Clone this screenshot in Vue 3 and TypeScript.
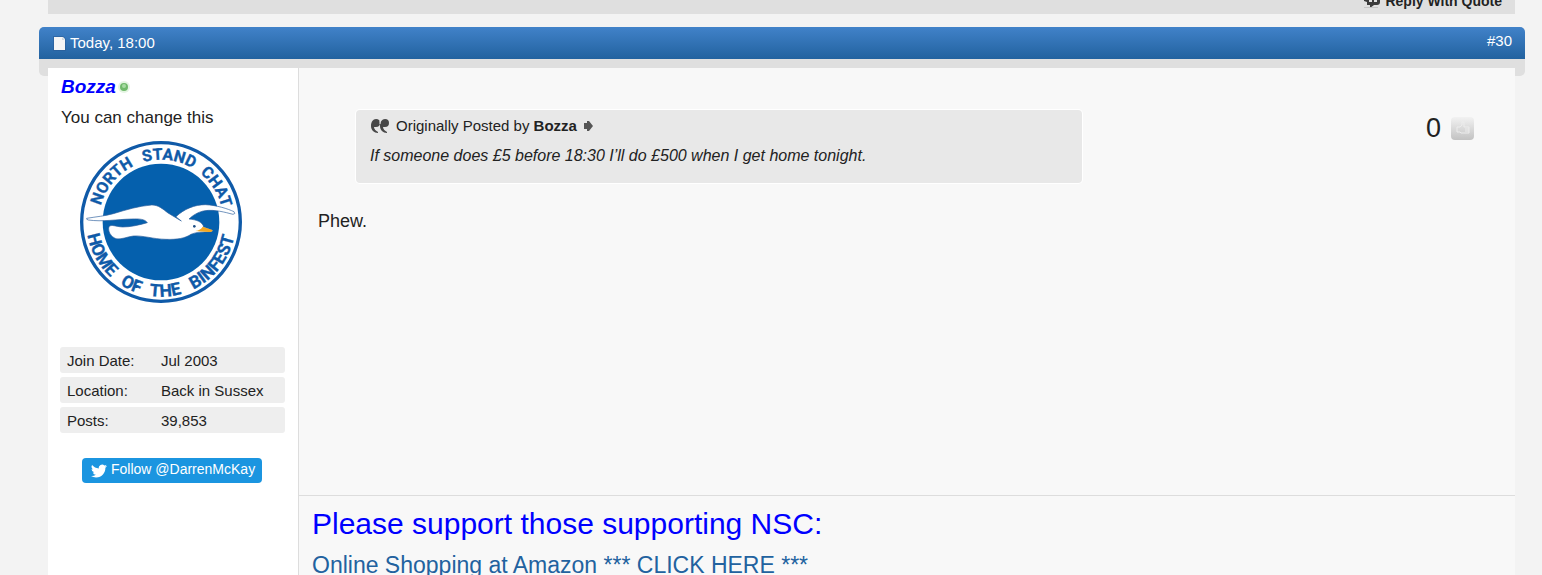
<script setup lang="ts">
interface Fact {
  label: string
  value: string
}

interface RingWord {
  text: string
  offset: string
}

const facts: Fact[] = [
  { label: 'Join Date:', value: 'Jul 2003' },
  { label: 'Location:', value: 'Back in Sussex' },
  { label: 'Posts:', value: '39,853' },
]

const topWords: RingWord[] = [
  { text: 'NORTH', offset: '22%' },
  { text: 'STAND', offset: '54%' },
  { text: 'CHAT', offset: '82%' },
]

const bottomWords: RingWord[] = [
  { text: 'HOME', offset: '16%' },
  { text: 'OF', offset: '36%' },
  { text: 'THE', offset: '52%' },
  { text: 'BINFEST', offset: '79%' },
]
</script>

<template>
  <main class="thread">
    <footer class="prev-foot">
      <a class="reply" href="#reply">
        <svg class="reply-icon" viewBox="0 0 17 16" aria-hidden="true">
          <path d="M3 1h12q2 0 2 2v6q0 3-3 3h-3l-4 3v-3H4V9L1 8V6l2-1z" fill="#3a3a3a" />
          <path d="M6 7h3v2H6zM11 7h3v2h-3z" fill="#dfdfdf" />
          <path d="M1 14h14v1H1z" fill="#c4c4c4" />
        </svg>
        <span>Reply With Quote</span>
      </a>
    </footer>

    <article class="post">
      <header class="post-head">
        <div class="head-bar">
          <span class="date">
            <svg class="doc" viewBox="0 0 13 15" aria-hidden="true">
              <path d="M0 0h10l3 3v12H0z" fill="#2a5c96" opacity=".6" />
              <path d="M1 1h9l2 2v11H1z" fill="#f5f5f5" />
              <path d="M9 1v3h3z" fill="#d5d9de" />
            </svg>
            <time>Today, 18:00</time>
          </span>
          <a class="number" href="#post30">#30</a>
        </div>
      </header>

      <div class="post-body">
        <aside class="user">
          <div class="name-row">
            <a class="name" href="#bozza">Bozza</a>
            <svg class="online" viewBox="0 0 14 14" role="img" aria-label="Online">
              <circle cx="7" cy="7" r="6" fill="#e4f5e2" />
              <circle cx="7" cy="7" r="4" fill="#6fb96a" />
              <circle cx="7" cy="6" r="2" fill="#a6dba1" />
            </svg>
          </div>
          <p class="title">You can change this</p>

          <svg class="badge" viewBox="0 0 555 555" role="img" aria-label="North Stand Chat">
            <defs>
              <path id="arc-top" d="M86 276A187 187 0 0 1 460 276" />
              <path id="arc-bottom" d="M49 276A224 224 0 0 0 497 276" />
            </defs>
            <circle cx="273" cy="276" r="238" fill="#fff" stroke="#0f5aa8" stroke-width="10" />
            <circle cx="273" cy="276" r="175" fill="#0560ad" />
            <text v-for="word in topWords" :key="word.text" class="ring ring-top">
              <textPath href="#arc-top" :startOffset="word.offset">{{ word.text }}</textPath>
            </text>
            <text v-for="word in bottomWords" :key="word.text" class="ring ring-bottom">
              <textPath href="#arc-bottom" :startOffset="word.offset">{{ word.text }}</textPath>
            </text>
            <path
              d="M50 265C80 260 105 258 130 251C170 239 205 228 245 225C264 224 280 238 294 249L334 273C323 265 320 262 318 260C342 237 374 224 406 224C442 226 472 236 492 245Q498 252 489 253C466 247 434 238 405 242C382 246 368 257 357 267C380 269 398 276 401 291L428 301Q427 307 414 306C389 305 375 308 363 313C345 325 322 329 288 328C248 327 219 316 190 318C169 321 155 329 138 326C122 320 113 303 117 290C124 282 137 290 158 291C182 291 207 285 232 278C225 267 207 266 185 267C140 268 98 276 55 270Q48 268 50 265Z"
              fill="#fff"
              stroke="#2c5f9d"
              stroke-width="2"
            />
            <path d="M398 290L427 300Q430 306 416 306L376 303Q393 300 398 290Z" fill="#f2a722" />
            <circle cx="373" cy="289" r="4" fill="#1d4f86" />
          </svg>

          <dl class="facts">
            <div v-for="fact in facts" :key="fact.label" class="fact">
              <dt>{{ fact.label }}</dt>
              <dd>{{ fact.value }}</dd>
            </div>
          </dl>

          <a class="follow" href="#follow">
            <svg class="bird" viewBox="0 0 24 24" aria-hidden="true">
              <path
                fill="#fff"
                d="M23.95 4.57a10 10 0 0 1-2.82.77 4.96 4.96 0 0 0 2.16-2.72c-.95.55-2 .96-3.13 1.18a4.92 4.92 0 0 0-8.38 4.49C7.69 8.1 4.07 6.13 1.64 3.16a4.92 4.92 0 0 0 1.52 6.57 4.9 4.9 0 0 1-2.23-.61v.06a4.92 4.92 0 0 0 3.95 4.83 5 5 0 0 1-2.21.08 4.94 4.94 0 0 0 4.6 3.42A9.87 9.87 0 0 1 0 19.54a14 14 0 0 0 7.55 2.21c9.05 0 14-7.5 14-13.98 0-.21 0-.42-.02-.63a9.94 9.94 0 0 0 2.46-2.55z"
              />
            </svg>
            <span class="follow-text">Follow @DarrenMcKay</span>
          </a>
        </aside>

        <section class="content">
          <div class="message">
            <div class="text">
              <blockquote class="quote">
                <div class="quote-head">
                  <svg class="marks" viewBox="0 0 19 15" aria-hidden="true">
                    <g fill="#484848">
                      <path d="M5 0C2 0 0 3 0 7c0 4 3 7 7 7v-1c-2-1-4-3-4-5h2q4 0 4-4T5 0z" />
                      <path d="M14 0c-3 0-5 3-5 7 0 4 3 7 7 7v-1c-2-1-4-3-4-5h2q4 0 4-4t-4-4z" />
                    </g>
                    <path d="M9 2v3" stroke="#e8e8e8" />
                  </svg>
                  <span>Originally Posted by <strong>Bozza</strong></span>
                  <a class="jump" href="#original" aria-label="View original post">
                    <svg viewBox="0 0 10 12" aria-hidden="true">
                      <path d="M1 3h3V1h2l4 5-4 5H4V9H1z" fill="#555" />
                    </svg>
                  </a>
                </div>
                <p class="quote-text">If someone does £5 before 18:30 I’ll do £500 when I get home tonight.</p>
              </blockquote>
              <p class="reply-text">Phew.</p>
            </div>
            <div class="likes">
              <span class="count">0</span>
              <button class="thumb" type="button" aria-label="Like">
                <svg viewBox="0 0 14 14" aria-hidden="true">
                  <path
                    d="M1 6h3l2-2V1h2v5h5v6H5L4 11H1zM9 8h4M9 10h4"
                    fill="none"
                    stroke="#ececec"
                    stroke-width="1"
                  />
                </svg>
              </button>
            </div>
          </div>

          <div class="signature">
            <p class="support">Please support those supporting NSC:</p>
            <a class="amazon" href="#amazon">Online Shopping at Amazon *** CLICK HERE ***</a>
          </div>
        </section>
      </div>
    </article>
  </main>
</template>

<style>
body {
  margin: 0;
  background: #f3f3f3;
  overflow: hidden;
}
</style>

<style scoped>
.thread {
  font-family: "Liberation Sans", Arial, sans-serif;
  font-size: 15px;
  line-height: 20px;
  color: #222;
  height: 100vh;
  overflow: hidden;
}

p,
dl,
dd,
blockquote {
  margin: 0;
}

a {
  text-decoration: none;
}

.prev-foot {
  display: flex;
  justify-content: flex-end;
  align-items: flex-end;
  height: 14px;
  margin: 0 27px 13px 48px;
  padding-right: 13px;
  box-sizing: border-box;
  background: #dfdfdf;
}

.reply {
  display: flex;
  align-items: center;
  gap: 5px;
  padding-bottom: 3px;
  font-size: 14px;
  font-weight: bold;
  color: #222;
}

.reply-icon {
  width: 17px;
  height: 16px;
}

.post-head {
  margin: 0 17px 0 39px;
  padding-bottom: 17px;
  background: #dfdfdf;
  border-radius: 5px;
}

.head-bar {
  display: flex;
  justify-content: space-between;
  align-items: center;
  height: 32px;
  padding: 0 13px 0 14px;
  background: linear-gradient(#4182c9, #22629f);
  border-radius: 5px 5px 0 0;
  color: #fff;
}

.date {
  display: flex;
  align-items: center;
  gap: 4px;
}

.doc {
  width: 13px;
  height: 15px;
}

.number {
  padding-bottom: 4px;
  color: #fff;
}

.post-body {
  position: relative;
  display: flex;
  margin: -8px 27px 0 48px;
  background: #f8f8f8;
}

.user {
  width: 250px;
  flex: none;
  box-sizing: content-box;
  min-height: 520px;
  border-right: 1px solid #ddd;
  background: #fff;
}

.name-row {
  display: flex;
  align-items: center;
  gap: 1px;
  padding: 9px 13px 0;
}

.name {
  font-size: 19px;
  font-weight: bold;
  font-style: italic;
  color: #00f;
}

.online {
  width: 14px;
  height: 14px;
}

.title {
  padding: 11px 13px 0;
  font-size: 17px;
}

.badge {
  display: block;
  width: 185px;
  height: 185px;
  margin: 2px 0 0 22px;
}

.ring {
  font-family: Roboto, "Liberation Sans", sans-serif;
  font-weight: bold;
  fill: #0f5aa8;
  stroke: #0f5aa8;
  stroke-width: 1px;
  text-anchor: middle;
}

.ring-top {
  font-size: 48px;
}

.ring-bottom {
  font-size: 52px;
}

.facts {
  display: grid;
  gap: 4px;
  margin: 32px 13px 0 12px;
}

.fact {
  display: flex;
  height: 26px;
  line-height: 27px;
  padding-left: 7px;
  background: #eee;
  border-radius: 3px;
}

dt {
  width: 94px;
}

.follow {
  display: flex;
  align-items: center;
  gap: 4px;
  width: fit-content;
  height: 25px;
  margin: 25px 0 0 34px;
  padding: 0 7px 0 9px;
  border-radius: 4px;
  background: #1b95e0;
  font-size: 14px;
  color: #fff;
}

.follow-text {
  padding-bottom: 3px;
}

.bird {
  width: 16px;
  height: 16px;
}

.content {
  flex: 1;
  display: flex;
  flex-direction: column;
}

.message {
  display: flex;
  justify-content: space-between;
  min-height: 385px;
  padding: 42px 41px 0 19px;
}

.text {
  flex: 0 1 802px;
}

.quote {
  min-height: 73px;
  margin: 0 38px 26px;
  padding: 6px 14px 0;
  box-sizing: border-box;
  background: #e8e8e8;
  border-radius: 4px;
  box-shadow: 0 0 0 1px #fff;
}

.quote-head {
  display: flex;
  align-items: center;
  gap: 6px;
}

.marks {
  width: 19px;
  height: 15px;
  margin-left: 1px;
}

.jump svg {
  display: block;
  width: 10px;
  height: 12px;
}

.quote-text {
  padding-top: 10px;
  font-size: 16px;
  font-style: italic;
}

.reply-text {
  font-size: 18px;
  line-height: 24px;
}

.likes {
  display: flex;
  align-items: center;
  height: 36px;
  gap: 10px;
}

.count {
  font-size: 27px;
}

.thumb {
  display: grid;
  place-items: center;
  width: 23px;
  height: 23px;
  padding: 0;
  border: 0;
  border-radius: 4px;
  background: linear-gradient(#f2f2f2, #c2c2c2);
}

.thumb svg {
  width: 14px;
  height: 14px;
}

.signature {
  padding: 10px 13px;
  border-top: 1px solid #ddd;
}

.support {
  font-size: 30px;
  line-height: 36px;
  color: #00f;
}

.amazon {
  display: block;
  padding-top: 8px;
  font-size: 23px;
  line-height: 30px;
  color: #22629f;
}
</style>
